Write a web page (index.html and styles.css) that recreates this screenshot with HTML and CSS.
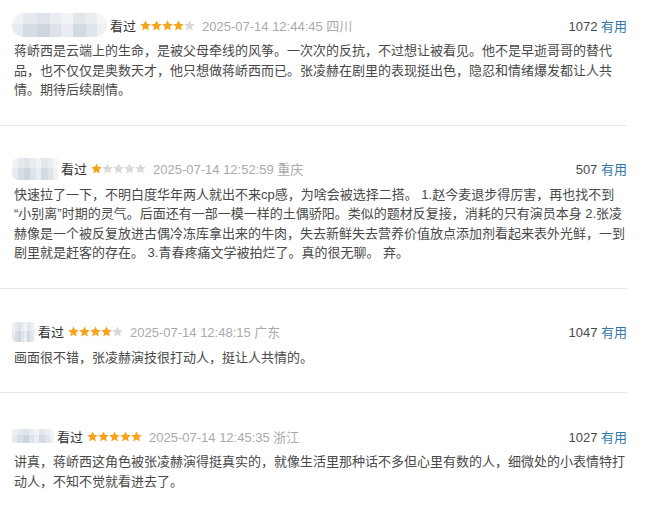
FILE: index.html
```html
<!DOCTYPE html>
<html lang="zh-CN">
<head>
<meta charset="utf-8">
<title>短评</title>
<link rel="stylesheet" href="styles.css">
</head>
<body>
<svg width="0" height="0" class="defs" aria-hidden="true">
  <defs>
    <polygon id="star" points="5.5,0.4 7.1,3.8 10.8,4.2 8.0,6.7 8.8,10.4 5.5,8.5 2.2,10.4 3.0,6.7 0.2,4.2 3.9,3.8"/>
  </defs>
</svg>
<div class="list">
  <div class="item">
    <div class="head">
      <div class="info">
        <span class="user u1"></span>
        <span class="status">看过</span>
        <span class="stars"><svg class="on" viewBox="0 0 11 11"><use href="#star"/></svg><svg class="on" viewBox="0 0 11 11"><use href="#star"/></svg><svg class="on" viewBox="0 0 11 11"><use href="#star"/></svg><svg class="on" viewBox="0 0 11 11"><use href="#star"/></svg><svg class="off" viewBox="0 0 11 11"><use href="#star"/></svg></span>
        <span class="time">2025-07-14 12:44:45 四川</span>
      </div>
      <div class="votes"><span class="num">1072</span> <span class="useful">有用</span></div>
    </div>
    <p class="text">蒋峤西是云端上的生命，是被父母牵线的风筝。一次次的反抗，不过想让被看见。他不是早逝哥哥的替代品，也不仅仅是奥数天才，他只想做蒋峤西而已。张凌赫在剧里的表现挺出色，隐忍和情绪爆发都让人共情。期待后续剧情。</p>
  </div>
  <div class="item">
    <div class="head">
      <div class="info">
        <span class="user u2"></span>
        <span class="status">看过</span>
        <span class="stars"><svg class="on" viewBox="0 0 11 11"><use href="#star"/></svg><svg class="off" viewBox="0 0 11 11"><use href="#star"/></svg><svg class="off" viewBox="0 0 11 11"><use href="#star"/></svg><svg class="off" viewBox="0 0 11 11"><use href="#star"/></svg><svg class="off" viewBox="0 0 11 11"><use href="#star"/></svg></span>
        <span class="time">2025-07-14 12:52:59 重庆</span>
      </div>
      <div class="votes"><span class="num">507</span> <span class="useful">有用</span></div>
    </div>
    <p class="text">快速拉了一下，不明白度华年两人就出不来cp感，为啥会被选择二搭。 1.赵今麦退步得厉害，再也找不到“小别离”时期的灵气。后面还有一部一模一样的土偶骄阳。类似的题材反复接，消耗的只有演员本身 2.张凌赫像是一个被反复放进古偶冷冻库拿出来的牛肉，失去新鲜失去营养价值放点添加剂看起来表外光鲜，一到剧里就是赶客的存在。 3.青春疼痛文学被拍烂了。真的很无聊。 弃。</p>
  </div>
  <div class="item">
    <div class="head">
      <div class="info">
        <span class="user u3"></span>
        <span class="status">看过</span>
        <span class="stars"><svg class="on" viewBox="0 0 11 11"><use href="#star"/></svg><svg class="on" viewBox="0 0 11 11"><use href="#star"/></svg><svg class="on" viewBox="0 0 11 11"><use href="#star"/></svg><svg class="on" viewBox="0 0 11 11"><use href="#star"/></svg><svg class="off" viewBox="0 0 11 11"><use href="#star"/></svg></span>
        <span class="time">2025-07-14 12:48:15 广东</span>
      </div>
      <div class="votes"><span class="num">1047</span> <span class="useful">有用</span></div>
    </div>
    <p class="text">画面很不错，张凌赫演技很打动人，挺让人共情的。</p>
  </div>
  <div class="item last">
    <div class="head">
      <div class="info">
        <span class="user u4"></span>
        <span class="status">看过</span>
        <span class="stars"><svg class="on" viewBox="0 0 11 11"><use href="#star"/></svg><svg class="on" viewBox="0 0 11 11"><use href="#star"/></svg><svg class="on" viewBox="0 0 11 11"><use href="#star"/></svg><svg class="on" viewBox="0 0 11 11"><use href="#star"/></svg><svg class="on" viewBox="0 0 11 11"><use href="#star"/></svg></span>
        <span class="time">2025-07-14 12:45:35 浙江</span>
      </div>
      <div class="votes"><span class="num">1027</span> <span class="useful">有用</span></div>
    </div>
    <p class="text">讲真，蒋峤西这角色被张凌赫演得挺真实的，就像生活里那种话不多但心里有数的人，细微处的小表情特打动人，不知不觉就看进去了。</p>
  </div>
</div>
</body>
</html>
```

FILE: styles.css
```css
html, body {
  margin: 0;
  padding: 0;
  background: #ffffff;
}

body {
  font-family: "Liberation Sans", "Noto Sans CJK SC", sans-serif;
  font-size: 13px;
  color: #494949;
}

.defs {
  position: absolute;
  width: 0;
  height: 0;
  overflow: hidden;
}

.list {
  width: 627px;
}

.item {
  padding: 33px 0 25px 14px;
  border-bottom: 1px solid #e8e8e8;
}

.item:first-child {
  padding-top: 15px;
}

.item.last {
  border-bottom: none;
}

.head {
  display: flex;
  justify-content: space-between;
  align-items: center;
  height: 20px;
  margin-bottom: 6px;
}

.info {
  display: flex;
  align-items: center;
}

.user {
  display: block;
  margin-left: -2px;
  margin-right: 3px;
  filter: blur(0.7px);
  background:
    linear-gradient(to bottom, rgba(255,255,255,0.35) 0 45%, rgba(255,255,255,0) 45% 100%),
    linear-gradient(to right,
      #e6ebef 0 12%, #d6dde4 12% 26%, #ccd6de 26% 40%, #dde3e9 40% 52%,
      #eaeef2 52% 64%, #d2dae2 64% 78%, #dfe5ea 78% 90%, #eef1f4 90% 100%);
}

.u1 { width: 95px; height: 24px; border-radius: 12px; }
.u2 { width: 46px; height: 22px; border-radius: 6px 2px 2px 6px; }
.u3 { width: 23px; height: 20px; border-radius: 3px; }
.u4 { width: 42px; height: 14px; border-radius: 2px; }

.status {
  color: #333333;
  margin-right: 4px;
}

.stars {
  display: flex;
  margin-right: 7px;
}

.stars svg {
  width: 11px;
  height: 11px;
  display: block;
}

.stars .on { fill: #f6a41e; }
.stars .off { fill: #d9d9d9; }

.time {
  color: #aaaaaa;
}

.votes {
  color: #494949;
}

.useful {
  color: #3377aa;
}

.text {
  margin: 0;
  line-height: 19.5px;
  color: #494949;
}
```
